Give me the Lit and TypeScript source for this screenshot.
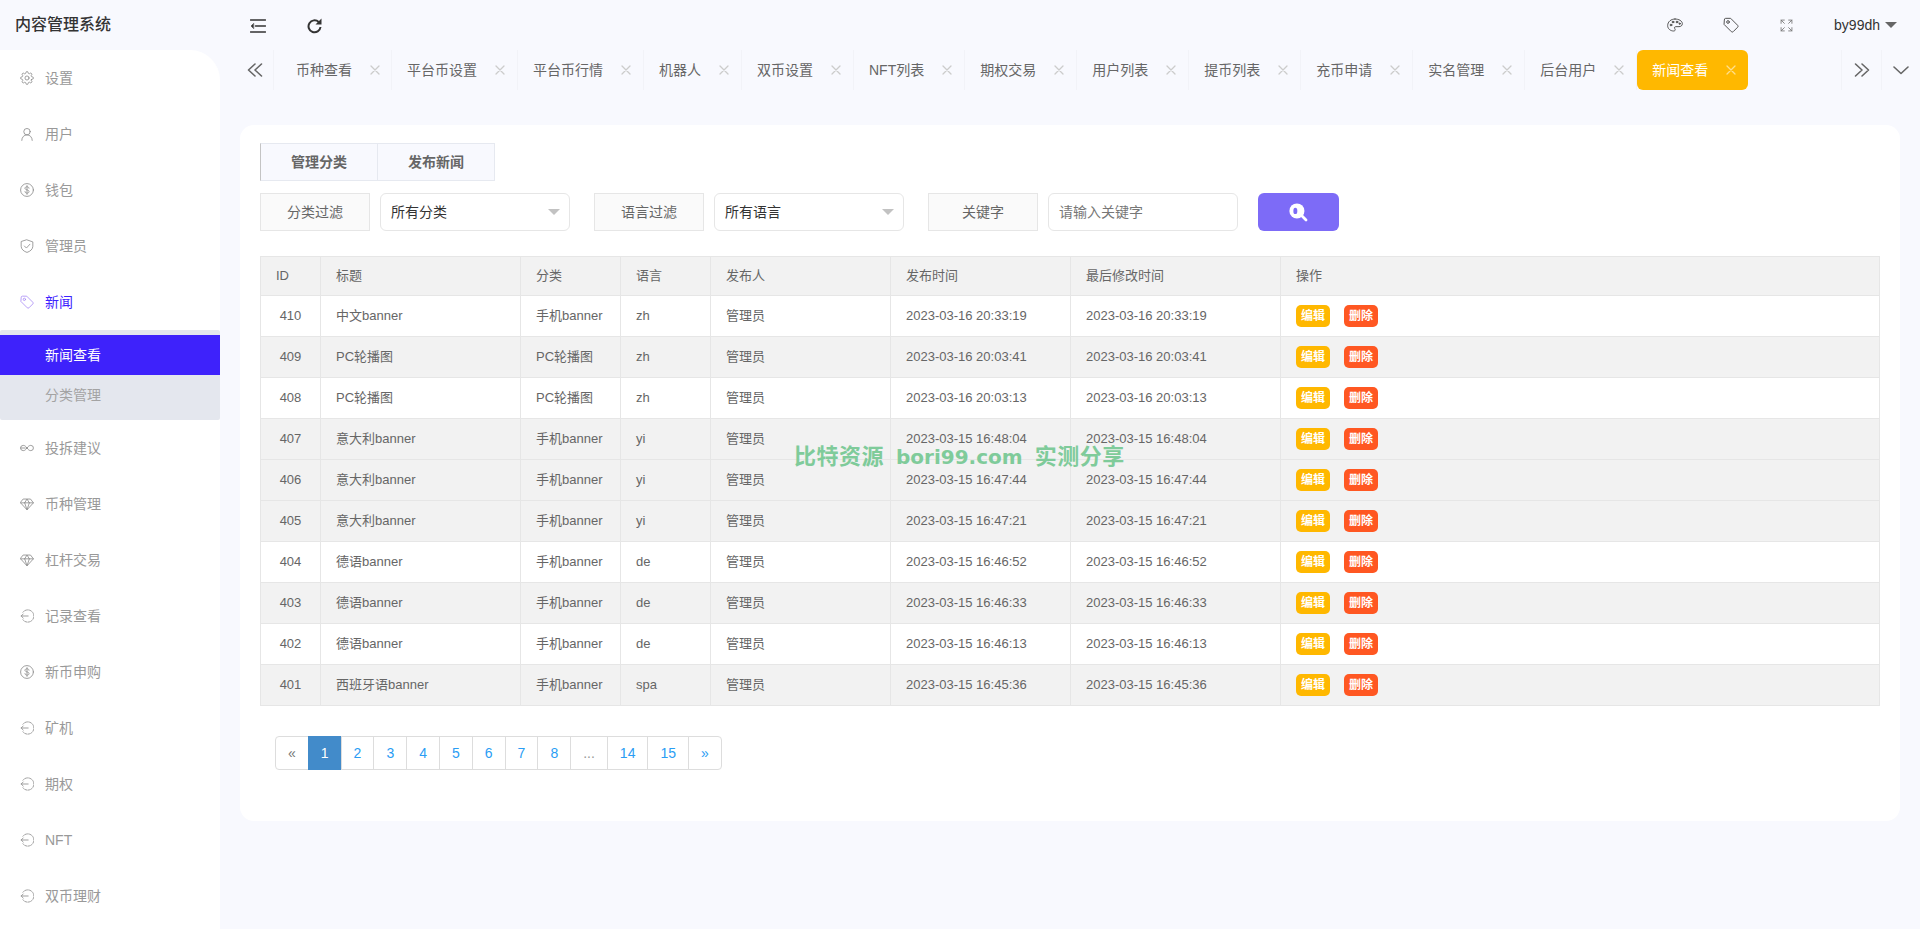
import { LitElement, html, svg, css } from 'lit';
import { customElement } from 'lit/decorators.js';

const icons: Record<string, unknown> = {
  gear: svg`<circle cx="12" cy="12" r="3.5"/><path d="M19.4 15a1.65 1.65 0 0 0 .33 1.82l.06.06a2 2 0 0 1 0 2.83 2 2 0 0 1-2.83 0l-.06-.06a1.65 1.65 0 0 0-1.82-.33 1.65 1.65 0 0 0-1 1.51V21a2 2 0 0 1-2 2 2 2 0 0 1-2-2v-.09A1.65 1.65 0 0 0 9 19.4a1.65 1.65 0 0 0-1.82.33l-.06.06a2 2 0 0 1-2.83 0 2 2 0 0 1 0-2.83l.06-.06a1.65 1.65 0 0 0 .33-1.82 1.65 1.65 0 0 0-1.51-1H3a2 2 0 0 1-2-2 2 2 0 0 1 2-2h.09A1.65 1.65 0 0 0 4.6 9a1.65 1.65 0 0 0-.33-1.82l-.06-.06a2 2 0 0 1 0-2.83 2 2 0 0 1 2.83 0l.06.06a1.65 1.65 0 0 0 1.82.33H9a1.65 1.65 0 0 0 1-1.51V3a2 2 0 0 1 2-2 2 2 0 0 1 2 2v.09a1.65 1.65 0 0 0 1 1.51 1.65 1.65 0 0 0 1.82-.33l.06-.06a2 2 0 0 1 2.83 0 2 2 0 0 1 0 2.83l-.06.06a1.65 1.65 0 0 0-.33 1.82V9a1.65 1.65 0 0 0 1.51 1H21a2 2 0 0 1 2 2 2 2 0 0 1-2 2h-.09a1.65 1.65 0 0 0-1.51 1z"/>`,
  user: svg`<circle cx="12" cy="8" r="5.5"/><path d="M3 23c0-5.500 4-9.500 9-9.500s9 4 9 9.500"/>`,
  dollar: svg`<circle cx="12" cy="12" r="11"/><path d="M15.500 9c0-1.500-1.500-2.500-3.500-2.500S8.500 7.500 8.500 9s1.500 2.300 3.500 2.800 3.500 1.300 3.500 2.900-1.500 2.700-3.500 2.700-3.500-1.100-3.500-2.700M12 4.500v15"/>`,
  shield: svg`<path d="M12 1.500l10 3.500v7.500c0 5-4.500 8.800-10 10.500C6.500 21.300 2 17.500 2 12.500V5z"/><path d="M7.500 12l3.500 3.500 6-6.500"/>`,
  tag: svg`<path d="M2 4a2 2 0 0 1 2-2h7.500l10.500 10.500a2 2 0 0 1 0 2.800l-6.700 6.700a2 2 0 0 1-2.800 0L2 11.500z"/><circle cx="7.500" cy="7.500" r="2"/>`,
  infinity: svg`<path d="M12 12c-2-3-4-4.500-6.500-4.500a4.500 4.500 0 0 0 0 9C8 16.500 10 15 12 12zm0 0c2 3 4 4.500 6.500 4.500a4.500 4.500 0 0 0 0-9C16 7.500 14 9 12 12z"/><path d="M1 12h8"/>`,
  diamond: svg`<path d="M6 3.500h12l5 6.500-11 12L1 10z"/><path d="M1 10h22M8 10l4 12 4-12M8 10l4-6.500L16 10"/>`,
  login: svg`<path d="M5 5.500a10.500 10.500 0 1 1 0 13" stroke-dasharray="3.500 1.800"/><path d="M2 12h12M5.500 8.500L2 12l3.500 3.500"/>`,
};

const menu = [
  { icon: 'gear', text: '设置' },
  { icon: 'user', text: '用户' },
  { icon: 'dollar', text: '钱包' },
  { icon: 'shield', text: '管理员' },
  { icon: 'tag', text: '新闻', active: true, children: ['新闻查看', '分类管理'] },
  { icon: 'infinity', text: '投拆建议' },
  { icon: 'diamond', text: '币种管理' },
  { icon: 'diamond', text: '杠杆交易' },
  { icon: 'login', text: '记录查看' },
  { icon: 'dollar', text: '新币申购' },
  { icon: 'login', text: '矿机' },
  { icon: 'login', text: '期权' },
  { icon: 'login', text: 'NFT' },
  { icon: 'login', text: '双币理财' },
];

const tabs = ['币种查看', '平台币设置', '平台币行情', '机器人', '双币设置', 'NFT列表', '期权交易', '用户列表', '提币列表', '充币申请', '实名管理', '后台用户', '新闻查看'];

const headers = ['ID', '标题', '分类', '语言', '发布人', '发布时间', '最后修改时间', '操作'];
const colWidths = [60, 200, 100, 90, 180, 180, 210, 599];

const rows = [
  { id: 410, title: '中文banner', cat: '手机banner', lang: 'zh', time: '2023-03-16 20:33:19' },
  { id: 409, title: 'PC轮播图', cat: 'PC轮播图', lang: 'zh', time: '2023-03-16 20:03:41', grey: true },
  { id: 408, title: 'PC轮播图', cat: 'PC轮播图', lang: 'zh', time: '2023-03-16 20:03:13' },
  { id: 407, title: '意大利banner', cat: '手机banner', lang: 'yi', time: '2023-03-15 16:48:04', grey: true },
  { id: 406, title: '意大利banner', cat: '手机banner', lang: 'yi', time: '2023-03-15 16:47:44', grey: true },
  { id: 405, title: '意大利banner', cat: '手机banner', lang: 'yi', time: '2023-03-15 16:47:21', grey: true },
  { id: 404, title: '德语banner', cat: '手机banner', lang: 'de', time: '2023-03-15 16:46:52' },
  { id: 403, title: '德语banner', cat: '手机banner', lang: 'de', time: '2023-03-15 16:46:33', grey: true },
  { id: 402, title: '德语banner', cat: '手机banner', lang: 'de', time: '2023-03-15 16:46:13' },
  { id: 401, title: '西班牙语banner', cat: '手机banner', lang: 'spa', time: '2023-03-15 16:45:36', grey: true },
];

const pages = ['«', '1', '2', '3', '4', '5', '6', '7', '8', '...', '14', '15', '»'];

@customElement('app-root')
export class AppRoot extends LitElement {
  static styles = css`
    :host {
      display: block;
      width: 100%;
      height: 100vh;
      overflow: hidden;
      background: #f8f9fe;
      color: #666;
      font-family: 'Liberation Sans', 'Noto Sans CJK SC', sans-serif;
      font-size: 14px;
      line-height: 20px;
    }

    svg {
      display: block;
      flex: none;
      fill: none;
      stroke: currentColor;
      stroke-linecap: round;
      stroke-linejoin: round;
    }

    /* top bar */
    .header {
      height: 50px;
      display: flex;
      align-items: center;
      color: #333;
    }
    .logo {
      width: 250px;
      padding-left: 15px;
      box-sizing: border-box;
      font-size: 16px;
      font-weight: 500;
    }
    .hd-menu {
      width: 16px;
      height: 14px;
      margin-top: 2px;
    }
    .hd-refresh {
      width: 16px;
      height: 16px;
      margin-left: 41px;
      margin-top: 2px;
    }
    .hd-right {
      margin-left: auto;
      display: flex;
      align-items: center;
      padding-right: 23px;
    }
    .hd-ico {
      width: 16px;
      height: 16px;
      margin-right: 40px;
      color: #555;
      stroke-width: 1.5;
    }
    .hd-ico.full {
      width: 13px;
      height: 13px;
      margin-left: 1px;
      margin-right: 41px;
      color: #777;
      stroke-width: 1.6;
    }
    .user-name {
      margin-top: -1px;
    }
    .caret {
      width: 0;
      height: 0;
      margin-left: 5px;
      border-left: 6px solid transparent;
      border-right: 6px solid transparent;
      border-top: 6px solid #666;
    }

    .body {
      display: flex;
      height: calc(100vh - 50px);
    }

    /* sidebar */
    .side {
      width: 220px;
      flex: none;
      background: #fff;
      border-top-right-radius: 30px;
      color: #999;
      overflow: hidden;
    }
    .nav-item {
      height: 56px;
      display: flex;
      align-items: center;
      padding-left: 20px;
    }
    .nav-item.on {
      color: #3e22ff;
    }
    .nav-ico {
      width: 14px;
      height: 14px;
      margin-right: 11px;
      stroke-width: 1.4;
      color: #8a8a8a;
    }
    .nav-item.on .nav-ico {
      color: #a98cf5;
    }
    .sub {
      background: #e4e7ee;
      border-radius: 2px;
      padding: 5px 0;
      height: 90px;
      box-sizing: border-box;
    }
    .sub-item {
      height: 40px;
      line-height: 40px;
      padding-left: 45px;
      color: #a3a3a3;
    }
    .sub-item.on {
      background: #3e22fb;
      color: #fff;
    }

    /* tabs + content */
    .main {
      flex: 1;
      min-width: 0;
    }
    .tabs {
      height: 40px;
      display: flex;
      margin-left: 10px;
    }
    .tab-btn {
      width: 40px;
      flex: none;
      box-sizing: border-box;
      display: flex;
      align-items: center;
      justify-content: center;
      color: #666;
      border-right: 1px solid #f2f3f8;
    }
    .tab-btn.first {
      width: 44px;
      padding-left: 6px;
    }
    .tab-btn svg {
      width: 16px;
      height: 16px;
      stroke-width: 1.6;
    }
    .tab-list {
      flex: 1;
      display: flex;
      min-width: 0;
    }
    .tab {
      display: flex;
      align-items: center;
      padding: 0 12px 0 15px;
      color: #666;
      border-right: 1px solid #f2f3f8;
    }
    .tab:first-child {
      padding: 0 11px 0 22px;
    }
    .tab svg {
      width: 10px;
      height: 10px;
      margin-left: 18px;
      color: #ccc;
      stroke-width: 1.3;
    }
    .tab.on {
      background: #ffb800;
      color: #fff;
      border-right: 0;
      border-radius: 6px;
    }
    .tab.on svg {
      color: rgba(255, 255, 255, 0.55);
    }
    .tab-btn.r {
      border-right: 0;
      border-left: 1px solid #f2f3f8;
    }
    .tab-btn.last {
      width: 39px;
    }

    .card {
      position: relative;
      margin: 35px 20px 0;
      height: 696px;
      box-sizing: border-box;
      background: #fff;
      border-radius: 14px;
      padding: 18px 20px 0;
    }
    .btn-group {
      display: flex;
      width: max-content;
      height: 38px;
      box-sizing: border-box;
      background: #f8f9fe;
      border: 1px solid #e6e9f0;
      border-left-color: #c4c4c4;
      font-weight: bold;
    }
    .btn-group div {
      width: 116px;
      line-height: 36px;
      text-align: center;
      color: #666;
    }
    .btn-group div + div {
      border-left: 1px solid #e6e9f0;
    }

    .filters {
      display: flex;
      margin-top: 12px;
      height: 38px;
    }
    .lbl {
      box-sizing: border-box;
      height: 38px;
      line-height: 36px;
      text-align: center;
      background: #fafafa;
      border: 1px solid #e6e6e6;
      width: 110px;
      flex: none;
      margin-right: 10px;
    }
    .lbl.kw {
      margin-left: 24px;
    }
    .lbl.lang {
      margin-left: 24px;
    }
    .ctl {
      box-sizing: border-box;
      height: 38px;
      line-height: 36px;
      background: #fff;
      border: 1px solid #e6e6e6;
      border-radius: 6px;
      padding-left: 10px;
      color: #333;
      position: relative;
      width: 190px;
      flex: none;
    }
    .ctl.ph {
      color: #777;
    }
    .ctl.sel::after {
      content: '';
      position: absolute;
      right: 9px;
      top: 15px;
      border-left: 6px solid transparent;
      border-right: 6px solid transparent;
      border-top: 6px solid #c2c2c2;
    }
    .search {
      width: 81px;
      height: 38px;
      margin-left: 20px;
      background: #7d6bf7;
      border-radius: 6px;
      display: flex;
      align-items: center;
      justify-content: center;
      color: #fff;
    }
    .search svg {
      width: 19px;
      height: 19px;
    }

    table {
      margin-top: 25px;
      border-collapse: collapse;
      table-layout: fixed;
      width: 1619px;
      font-size: 13px;
      line-height: 20px;
    }
    th,
    td {
      border: 1px solid #e6e6e6;
      padding: 0 15px;
      text-align: left;
      font-weight: normal;
      color: #666;
      height: 41px;
      box-sizing: border-box;
    }
    td {
      padding-bottom: 1px;
    }
    th {
      background: #f2f2f2;
      height: 39px;
      padding-bottom: 1px;
    }
    tr.grey td {
      background: #f2f2f2;
    }
    td.id {
      text-align: center;
    }
    .op {
      display: flex;
      gap: 14px;
    }
    .op span {
      width: 34px;
      height: 22px;
      line-height: 22px;
      border-radius: 5px;
      text-align: center;
      color: #fff;
      font-size: 12px;
      font-weight: bold;
    }
    .op .edit {
      background: #ffb800;
    }
    .op .del {
      background: #ff5722;
    }

    .pager {
      display: flex;
      width: max-content;
      margin: 30px 0 0 15px;
      font-size: 14px;
    }
    .pager a {
      box-sizing: border-box;
      height: 34px;
      line-height: 32px;
      padding: 0 12px;
      border: 1px solid #ddd;
      margin-left: -1px;
      color: #2a9df4;
      background: #fff;
    }
    .pager a:first-child {
      margin-left: 0;
      border-radius: 4px 0 0 4px;
      color: #777;
    }
    .pager a:last-child {
      border-radius: 0 4px 4px 0;
    }
    .pager a.on {
      background: #428bca;
      border-color: #428bca;
      color: #fff;
    }
    .pager a.gap {
      color: #999;
    }

    .mark {
      position: absolute;
      left: 554px;
      top: 318px;
      display: flex;
      gap: 12px;
      white-space: nowrap;
      color: #7fcb9a;
      font-size: 22px;
      line-height: 28px;
      font-weight: bold;
      letter-spacing: 0.5px;
    }
    .mark b {
      font-family: 'DejaVu Sans', sans-serif;
      font-size: 20px;
      letter-spacing: 0;
    }
  `;

  private _icon(name: string, cls = 'nav-ico') {
    return html`<svg class=${cls} viewBox="0 0 24 24">${icons[name]}</svg>`;
  }

  private _x() {
    return html`<svg viewBox="0 0 10 10"><path d="M1 1l8 8M9 1l-8 8" /></svg>`;
  }

  private _side() {
    return menu.map(
      (m) => html`
        <div class="nav-item ${m.active ? 'on' : ''}">${this._icon(m.icon)}<span>${m.text}</span></div>
        ${m.children
          ? html`<div class="sub">
              ${m.children.map((c, i) => html`<div class="sub-item ${i === 0 ? 'on' : ''}">${c}</div>`)}
            </div>`
          : ''}
      `
    );
  }

  render() {
    return html`
      <div class="header">
        <div class="logo">内容管理系统</div>
        <svg class="hd-menu" viewBox="0 0 16 14" stroke-width="1.500">
          <path d="M.5 1h15M5.500 7h10M.5 13h15" />
          <path d="M3.500 4.500L1 7l2.500 2.500z" fill="currentColor" stroke-width="0.5" />
        </svg>
        <svg class="hd-refresh" viewBox="0 0 16 16" stroke-width="2">
          <path d="M13.500 9a6 6 0 1 1-1.800-5" stroke-linecap="butt" />
          <path d="M14.500 .5v6h-6z" fill="currentColor" stroke="none" />
        </svg>
        <div class="hd-right">
          <svg class="hd-ico" viewBox="0 0 24 24">
            <path d="M12 3C6 3 1 7 1 13c0 4.500 4 8 9 8 1.700 0 2.300-1 2.300-2 0-.7-.4-1.100-.7-1.600-.3-.4-.4-.8-.4-1.200 0-1 .8-1.700 1.900-1.700H18c2.800 0 5-1.600 5-4.500C23 6 18 3 12 3z" />
            <circle cx="6" cy="12" r="1.300" fill="currentColor" />
            <circle cx="9" cy="7.500" r="1.300" fill="currentColor" />
            <circle cx="15" cy="7.500" r="1.300" fill="currentColor" />
            <circle cx="19" cy="10" r="1" fill="currentColor" />
          </svg>
          ${this._icon('tag', 'hd-ico')}
          <svg class="hd-ico full" viewBox="0 0 24 24">
            <path d="M2 8V2h6M2 2l6 6M22 8V2h-6M22 2l-6 6M2 16v6h6M2 22l6-6M22 16v6h-6M22 22l-6-6" />
          </svg>
          <span class="user-name">by99dh</span>
          <span class="caret"></span>
        </div>
      </div>
      <div class="body">
        <div class="side">${this._side()}</div>
        <div class="main">
          <div class="tabs">
            <div class="tab-btn first">
              <svg viewBox="0 0 16 16"><path d="M8 2L1.500 8 8 14M14.500 2L8 8l6.500 6" /></svg>
            </div>
            <div class="tab-list">
              ${tabs.map(
                (t, i) => html`<div class="tab ${i === tabs.length - 1 ? 'on' : ''}">${t}${this._x()}</div>`
              )}
            </div>
            <div class="tab-btn r">
              <svg viewBox="0 0 16 16"><path d="M1.500 2L8 8l-6.500 6M8 2l6.500 6L8 14" /></svg>
            </div>
            <div class="tab-btn r last">
              <svg viewBox="0 0 16 16"><path d="M1 5l7 6.500L15 5" /></svg>
            </div>
          </div>
          <div class="card">
            <div class="btn-group"><div>管理分类</div><div>发布新闻</div></div>
            <div class="filters">
              <div class="lbl">分类过滤</div>
              <div class="ctl sel">所有分类</div>
              <div class="lbl lang">语言过滤</div>
              <div class="ctl sel">所有语言</div>
              <div class="lbl kw">关键字</div>
              <div class="ctl ph">请输入关键字</div>
              <div class="search">
                <svg viewBox="0 0 24 24">
                  <circle cx="10" cy="10" r="9.500" fill="currentColor" stroke="none" />
                  <path d="M16.500 16.500l5 5" stroke-width="3.500" />
                  <ellipse cx="8" cy="10" rx="2.500" ry="4" fill="#7d6bf7" stroke="none" />
                </svg>
              </div>
            </div>
            <table>
              <colgroup>${colWidths.map((w) => html`<col style="width:${w}px" />`)}</colgroup>
              <thead>
                <tr>${headers.map((h) => html`<th>${h}</th>`)}</tr>
              </thead>
              <tbody>
                ${rows.map(
                  (r) => html`<tr class=${r.grey ? 'grey' : ''}>
                    <td class="id">${r.id}</td>
                    <td>${r.title}</td>
                    <td>${r.cat}</td>
                    <td>${r.lang}</td>
                    <td>管理员</td>
                    <td>${r.time}</td>
                    <td>${r.time}</td>
                    <td>
                      <div class="op"><span class="edit">编辑</span><span class="del">删除</span></div>
                    </td>
                  </tr>`
                )}
              </tbody>
            </table>
            <div class="pager">
              ${pages.map(
                (p) => html`<a class=${p === '1' ? 'on' : p === '...' ? 'gap' : ''}>${p}</a>`
              )}
            </div>
            <div class="mark"><span>比特资源</span><b>bori99.com</b><span>实测分享</span></div>
          </div>
        </div>
      </div>
    `;
  }
}
